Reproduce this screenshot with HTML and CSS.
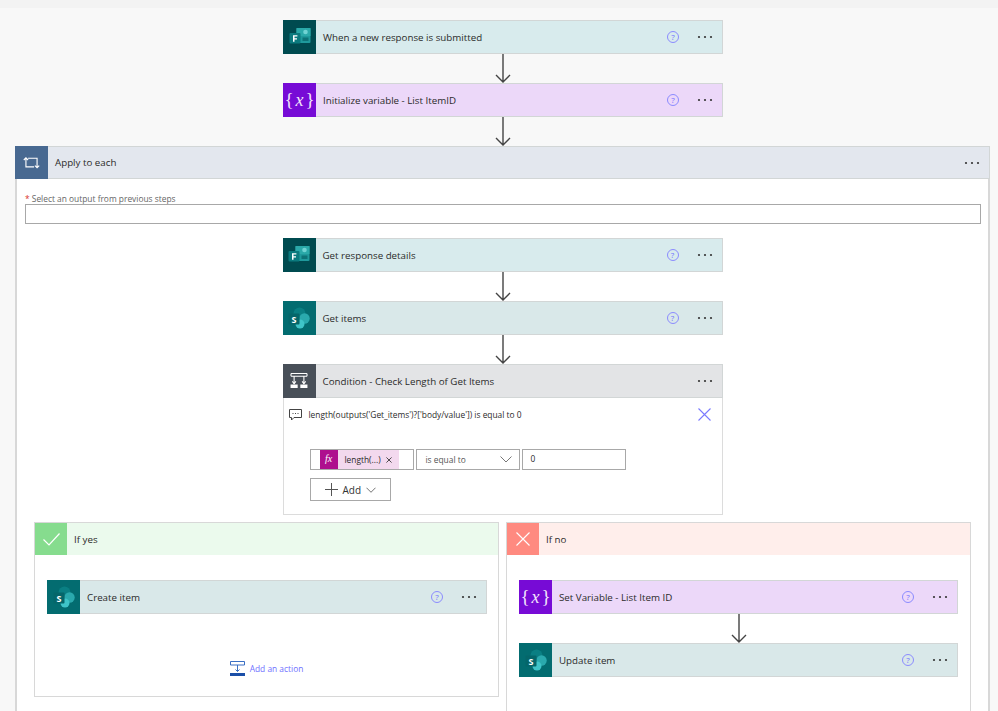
FILE: index.html
```html
<!DOCTYPE html>
<html lang="en">
<head>
  <meta charset="UTF-8" />
  <meta name="viewport" content="width=device-width, initial-scale=1.0"/>
  <title>Flow designer</title>
  <link rel="stylesheet" href="styles.css">
</head>
<body>

  <!-- Shared icons -->
  <svg class="defs" width="0" height="0">
    <symbol id="ic-forms" viewBox="0 0 24 24">
      <rect x="8.500" y="3" width="14" height="15" rx="1" fill="#1f9a9c"/>
      <rect x="8.500" y="3" width="14" height="8" fill="#2aa9a9"/>
      <circle cx="17.500" cy="7" r="2.300" fill="#6fd3d3"/>
      <rect x="14.500" y="12.500" width="6" height="3.500" fill="#0d7377"/>
      <rect x="1.500" y="8" width="11" height="10.500" rx="1" fill="#0b7a7e"/>
      <path d="M5 10.300h4.400v1.300H6.500v1.700h2.500v1.300H6.500v2.200H5z" fill="#fff"/>
    </symbol>
    <symbol id="ic-sp-discs" viewBox="0 0 24 24">
      <circle cx="12.500" cy="7.500" r="6" fill="#0a7f83"/>
      <circle cx="17.500" cy="12.500" r="5.200" fill="#2aa9ad"/>
      <circle cx="13" cy="18" r="4.500" fill="#3fc4c8"/>
      <rect x="1.500" y="7.500" width="11" height="11" rx="1" fill="#05666a"/>
    </symbol>
    <symbol id="ic-more" viewBox="0 0 16 4">
      <circle cx="2" cy="2" r="1.100" fill="#333"/>
      <circle cx="8" cy="2" r="1.100" fill="#333"/>
      <circle cx="14" cy="2" r="1.100" fill="#333"/>
    </symbol>
    <symbol id="ic-arrow" viewBox="0 0 16 29">
      <path d="M8 0v28M1 21l7 7 7-7" fill="none" stroke="#444" stroke-width="1.400"/>
    </symbol>
  </svg>

  <div class="top-strip"></div>

  <main class="canvas">

    <div class="card card-forms">
      <div class="card-icon"><svg width="24" height="24"><use href="#ic-forms"/></svg></div>
      <div class="card-title">When a new response is submitted</div>
      <span class="help">?</span>
      <svg class="more" width="16" height="4"><use href="#ic-more"/></svg>
    </div>
    <svg class="arrow" width="16" height="29"><use href="#ic-arrow"/></svg>

    <div class="card card-var">
      <div class="card-icon var-glyph">{<i>x</i>}</div>
      <div class="card-title">Initialize variable - List ItemID</div>
      <span class="help">?</span>
      <svg class="more" width="16" height="4"><use href="#ic-more"/></svg>
    </div>
    <svg class="arrow" width="16" height="29"><use href="#ic-arrow"/></svg>

    <!-- Apply to each -->
    <section class="scope">
      <div class="card card-loop">
        <div class="card-icon">
          <svg width="17" height="12" viewBox="0 0 18 14" fill="none" stroke="#fff" stroke-width="1.300">
            <path d="M0 3.500l2.500-2.500L5 3.500M2.500 1.500V11.500H12"/>
            <path d="M5 1.500h10.500V12.500M13 10l2.500 2.500L18 10"/>
          </svg>
        </div>
        <div class="card-title">Apply to each</div>
        <svg class="more" width="16" height="4"><use href="#ic-more"/></svg>
      </div>

      <div class="scope-body">
        <label class="field-label"><span class="req">*</span> Select an output from previous steps</label>
        <div class="field-box"></div>

        <div class="steps">
          <div class="card card-forms">
            <div class="card-icon"><svg width="24" height="24"><use href="#ic-forms"/></svg></div>
            <div class="card-title">Get response details</div>
            <span class="help">?</span>
            <svg class="more" width="16" height="4"><use href="#ic-more"/></svg>
          </div>
          <svg class="arrow" width="16" height="29"><use href="#ic-arrow"/></svg>

          <div class="card card-sp">
            <div class="card-icon">
              <svg width="24" height="24"><use href="#ic-sp-discs"/><text x="7" y="16.500" class="sp-letter">S</text></svg>
            </div>
            <div class="card-title">Get items</div>
            <span class="help">?</span>
            <svg class="more" width="16" height="4"><use href="#ic-more"/></svg>
          </div>
          <svg class="arrow" width="16" height="29"><use href="#ic-arrow"/></svg>

          <!-- Condition -->
          <div class="condition">
            <div class="card card-cond">
              <div class="card-icon">
                <svg width="18" height="16" viewBox="0 0 20 18" fill="none" stroke="#fff" stroke-width="1.200">
                  <path d="M1 .6h18M1 3.600h18M4.500 3.600V12M15.500 3.600V12M1 .6v3M19 .6v3"/>
                  <path d="M2.500 9.500l2 2.500 2-2.500M13.500 9.500l2 2.500 2-2.500"/>
                  <path d="M.5 13h8v4h-8zM11.500 13h8v4h-8z" fill="#fff" stroke="none"/>
                </svg>
              </div>
              <div class="card-title">Condition - Check Length of Get Items</div>
              <svg class="more" width="16" height="4"><use href="#ic-more"/></svg>
            </div>

            <div class="comment-row">
              <svg width="13" height="13" viewBox="0 0 13 13" fill="none" stroke="#444">
                <path d="M.5 1.500h12v8H5l-2.500 2.500V9.500h-2z"/>
                <path d="M3.500 5.500h1M6 5.500h1M8.500 5.500h1"/>
              </svg>
              <span class="comment-text">length(outputs('Get_items')?['body/value']) is equal to 0</span>
              <svg class="comment-close" width="13" height="13" viewBox="0 0 13 13" stroke="#7a7aff" stroke-width="1.100">
                <path d="M.5.5l12 12M12.500.5l-12 12"/>
              </svg>
            </div>

            <div class="rule-row">
              <div class="rule-token-box">
                <div class="token">
                  <span class="token-fx">fx</span>
                  <span class="token-label">length(...)</span>
                  <svg width="6" height="6" viewBox="0 0 7 7" stroke="#333"><path d="M.5.5l6 6M6.500.5l-6 6"/></svg>
                </div>
              </div>
              <div class="rule-select">
                <span>is equal to</span>
                <svg width="12" height="7" viewBox="0 0 12 7" fill="none" stroke="#777"><path d="M.5.5L6 6 11.500.5"/></svg>
              </div>
              <div class="rule-value">0</div>
            </div>

            <div class="add-btn">
              <svg width="13" height="13" viewBox="0 0 13 13" stroke="#555"><path d="M6.500 0v13M0 6.500h13"/></svg>
              <span>Add</span>
              <svg width="10" height="6" viewBox="0 0 11 6" fill="none" stroke="#666"><path d="M.5.5l5 5 5-5"/></svg>
            </div>
          </div>
        </div>

        <div class="branches">
          <div class="branch branch-yes">
            <div class="branch-head">
              <div class="branch-icon">
                <svg width="17" height="13" viewBox="0 0 17 13" fill="none" stroke="#fff" stroke-width="1.200"><path d="M.5 6.500l5.500 5.500L16.500.5"/></svg>
              </div>
              <div class="card-title">If yes</div>
            </div>
            <div class="branch-body">
              <div class="card card-sp">
                <div class="card-icon">
                  <svg width="24" height="24"><use href="#ic-sp-discs"/><text x="7" y="16.500" class="sp-letter">S</text></svg>
                </div>
                <div class="card-title">Create item</div>
                <span class="help">?</span>
                <svg class="more" width="16" height="4"><use href="#ic-more"/></svg>
              </div>
              <div class="add-action">
                <svg width="15" height="15" viewBox="0 0 15 15" fill="none" stroke="#3a6fc4">
                  <path d="M.5.5h14v3.500H.5zM7.500 4v6.500M5.500 8.500l2 2 2-2"/>
                  <path d="M0 12h15v3H0z" fill="#1b4fa8" stroke="none"/>
                </svg>
                <span>Add an action</span>
              </div>
            </div>
          </div>

          <div class="branch branch-no">
            <div class="branch-head">
              <div class="branch-icon">
                <svg width="14" height="14" viewBox="0 0 14 14" stroke="#fff" stroke-width="1.100"><path d="M.5.5l13 13M13.500.5l-13 13"/></svg>
              </div>
              <div class="card-title">If no</div>
            </div>
            <div class="branch-body branch-body-no">
              <div class="card card-var">
                <div class="card-icon var-glyph">{<i>x</i>}</div>
                <div class="card-title">Set Variable - List Item ID</div>
                <span class="help">?</span>
                <svg class="more" width="16" height="4"><use href="#ic-more"/></svg>
              </div>
              <svg class="arrow" width="16" height="29"><use href="#ic-arrow"/></svg>
              <div class="card card-sp">
                <div class="card-icon">
                  <svg width="24" height="24"><use href="#ic-sp-discs"/><text x="7" y="16.500" class="sp-letter">S</text></svg>
                </div>
                <div class="card-title">Update item</div>
                <span class="help">?</span>
                <svg class="more" width="16" height="4"><use href="#ic-more"/></svg>
              </div>
            </div>
          </div>
        </div>
      </div>
    </section>
  </main>

</body>
</html>
```

FILE: styles.css
```css
html, body {
  margin: 0;
  height: 711px;
  overflow: hidden;
}
body {
  font-family: "Open Sans", "Noto Sans", Arial, sans-serif;
  font-size: 10px;
  color: #2b2b2b;
  background: #f8f8f8;
}
.defs {
  position: absolute;
}
.sp-letter {
  font-family: "Open Sans", Arial, sans-serif;
  font-size: 9px;
  font-weight: 700;
  fill: #fff;
  text-anchor: middle;
}
.top-strip {
  height: 8px;
  background: #f3f3f3;
}
.canvas {
  display: flex;
  flex-direction: column;
  align-items: center;
  padding: 12px 0 0 8px;
}
.arrow {
  display: block;
  flex: none;
}

/* Cards */
.card {
  display: flex;
  align-items: center;
  box-sizing: border-box;
  width: 440px;
  height: 34px;
  flex: none;
  border: 1px solid #d2d6d6;
  border-left: 0;
  padding-right: 9px;
}
.card-icon {
  display: flex;
  align-items: center;
  justify-content: center;
  width: 33px;
  align-self: stretch;
  margin: -1px 0;
  flex: none;
}
.card-title {
  flex: 1;
  margin-left: 7px;
  font-size: 9.750px;
  white-space: nowrap;
}
.help {
  width: 10px;
  height: 10px;
  border: 1px solid #8b8bff;
  border-radius: 50%;
  margin-right: 18px;
  color: #6f6fff;
  font-size: 8px;
  line-height: 10px;
  text-align: center;
}
.card-forms { background: #d8ebed; }
.card-forms .card-icon { background: #004b50; }
.card-sp { background: #d9e8e9; }
.card-sp .card-icon { background: #036c70; }
.card-var { background: #ecd8f9; }
.card-var .card-icon { background: #770bd6; }
.card-loop { background: #e3e7ee; }
.card-loop .card-icon { background: #486991; }
.card-cond { background: #e3e4e6; }
.card-cond .card-icon { background: #484f58; }

.var-glyph {
  color: #f3e6fc;
  font-family: "Liberation Serif", serif;
  font-size: 19px;
}
.var-glyph i {
  font-size: 18px;
  margin: 0 2px;
}

/* Apply to each */
.scope {
  box-sizing: border-box;
  width: 975px;
  flex: none;
  border: 1px solid #d8d8d8;
  border-width: 0 2px;
  background: #fff;
  margin-left: -1px;
}
.scope > .card-loop {
  width: auto;
  margin: 0 -2px;
  height: 33px;
}
.field-label {
  display: block;
  margin: 15px 0 0 8px;
  height: 10px;
  font-size: 8.400px;
  line-height: 10px;
  color: #666;
}
.req {
  color: #d9302a;
}
.field-box {
  box-sizing: border-box;
  height: 20px;
  margin: 0 7px 0 8px;
  border: 1px solid #a8a8a8;
}
.steps {
  display: flex;
  flex-direction: column;
  align-items: center;
  padding: 14px 0 0;
}

/* Condition */
.condition {
  box-sizing: border-box;
  width: 440px;
  height: 151px;
  background: #fff;
  border: 1px solid #dcdcdc;
  border-top: 0;
}
.condition > .card {
  margin-left: -1px;
  width: 440px;
}
.comment-row {
  display: flex;
  align-items: center;
  gap: 7px;
  height: 14px;
  margin: 9px 11px 0 5px;
}
.comment-text {
  flex: 1;
  font-size: 8.400px;
  white-space: nowrap;
}
.rule-row {
  display: flex;
  gap: 2px;
  height: 21px;
  margin: 28px 0 0 26px;
}
.rule-row > div {
  box-sizing: border-box;
  border: 1px solid #a8a8a8;
  background: #fff;
}
.rule-token-box {
  width: 104px;
  padding-left: 9px;
}
.token {
  display: flex;
  align-items: center;
  width: 79px;
  height: 19px;
  background: #f3d9ee;
}
.token-fx {
  width: 18px;
  height: 19px;
  background: #ae0f8e;
  color: #fff;
  font-family: "Liberation Serif", serif;
  font-style: italic;
  font-size: 10px;
  line-height: 18px;
  text-align: center;
}
.token-label {
  margin: 0 5px 0 7px;
  font-size: 8.400px;
}
.rule-select {
  display: flex;
  align-items: center;
  justify-content: space-between;
  width: 104px;
  padding: 0 7px 0 9px;
  font-size: 8.400px;
  color: #555;
}
.rule-value {
  width: 104px;
  padding-left: 8px;
  font-size: 8.400px;
  line-height: 17px;
}
.add-btn {
  display: flex;
  align-items: center;
  box-sizing: border-box;
  width: 81px;
  height: 23px;
  margin: 8px 0 0 26px;
  padding-left: 14px;
  gap: 5px;
  border: 1px solid #a8a8a8;
  font-size: 10px;
  font-weight: 500;
  color: #333;
}

/* If yes / if no */
.branches {
  display: flex;
  align-items: flex-start;
  gap: 7px;
  margin: 7px 17px 0 17px;
}
.branch {
  box-sizing: border-box;
  width: 465px;
  border: 1px solid #d8d8d8;
  background: #fff;
}
.branch-no {
  border-bottom: 0;
}
.branch-head {
  display: flex;
  align-items: center;
  height: 32px;
}
.branch-icon {
  display: flex;
  align-items: center;
  justify-content: center;
  width: 32px;
  height: 32px;
}
.branch-yes .branch-head { background: #ebfaed; }
.branch-yes .branch-icon { background: #86dc8e; }
.branch-no .branch-head { background: #ffeeeb; }
.branch-no .branch-icon { background: #ff8a80; }
.branch-body {
  height: 141px;
  padding: 25px 0 0 12px;
  box-sizing: border-box;
}
.branch-body-no {
  height: 156px;
  display: flex;
  flex-direction: column;
  align-items: center;
  padding-left: 0;
}
.branch-body-no .card {
  width: 439px;
}
.add-action {
  display: flex;
  align-items: center;
  justify-content: center;
  gap: 5px;
  margin: 47px 0 0 -12px;
  color: #6f6fff;
  font-size: 8.400px;
}
```
